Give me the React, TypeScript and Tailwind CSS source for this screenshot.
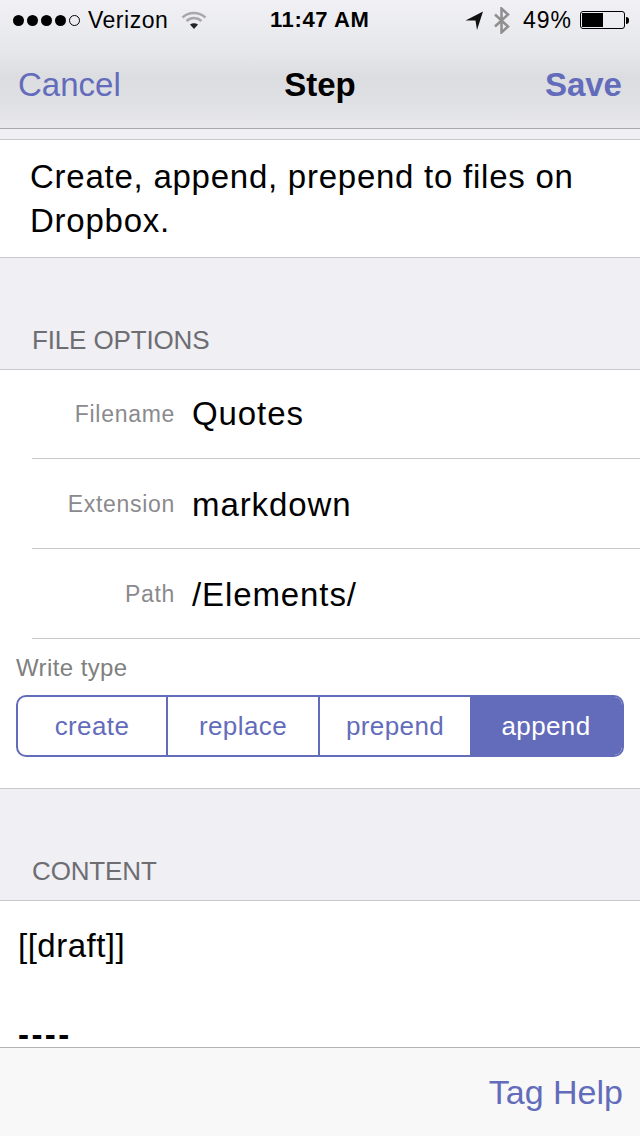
const font = "font-['Liberation_Sans',Arial,sans-serif]";

function StatusBar() {
  return (
    <div className="relative flex h-10 items-center justify-between pl-[13px] pr-[11px] text-[23px] leading-none text-black">
      <div className="flex items-center">
        <div className="flex items-center gap-[3px]">
          <span className="h-[11px] w-[11px] rounded-full bg-black" />
          <span className="h-[11px] w-[11px] rounded-full bg-black" />
          <span className="h-[11px] w-[11px] rounded-full bg-black" />
          <span className="h-[11px] w-[11px] rounded-full bg-black" />
          <span className="h-[11px] w-[11px] rounded-full border border-black" />
        </div>
        <span className="ml-[8px] tracking-[0.5px]">Verizon</span>
        <svg className="ml-[13px]" width="26" height="20" viewBox="0 0 26 20" fill="none">
          <path d="M1.500 7.500C8 1.500 17.500 1.500 24.500 7.500" stroke="#a8a8a8" strokeWidth="2.500" />
          <path d="M5.500 11C10 7 16 7 20.500 11" stroke="#a8a8a8" strokeWidth="2.500" />
          <path d="M9 14.500C11.500 12.700 14.500 12.700 17 14.500L13 19Z" fill="#222" />
        </svg>
      </div>
      <span className="absolute left-[270px] top-[9px] text-[22px] font-bold tracking-[0.6px]">11:47 AM</span>
      <div className="flex items-center">
        <svg width="18" height="19" viewBox="0 0 18 19">
          <path d="M0.500 9.500L18 0.500L12 19L10.500 9.500Z" fill="#111" />
        </svg>
        <svg className="ml-[11px]" width="16" height="27" viewBox="0 0 16 27" fill="none">
          <path d="M1 7.500L14 19.500L7.500 25.500V1.500L14 7.500L1 19.500" stroke="#8f8f8f" strokeWidth="2.500" />
        </svg>
        <span className="ml-[13px] tracking-[1px]">49%</span>
        <div className="ml-[8px] flex items-center">
          <div className="h-[18px] w-[45px] rounded-[3px] border border-black p-[1px]">
            <div className="h-full w-[21px] bg-black" />
          </div>
          <div className="ml-[1px] h-[7px] w-[3px] rounded-r-full bg-black" />
        </div>
      </div>
    </div>
  );
}

function NavBar() {
  return (
    <div className="grid h-[88px] grid-cols-3 items-start px-[18px] pt-[25px] text-[33px] leading-[40px]">
      <span className="text-[#636cbb]">Cancel</span>
      <span className="text-center font-bold text-black">Step</span>
      <span className="text-right font-bold text-[#636cbb]">Save</span>
    </div>
  );
}

function FieldRow({ label, value, box }: { label: string; value: string; box: string }) {
  return (
    <div className={`ml-8 flex items-center border-b border-[#c8c7cc] ${box}`}>
      <span className="w-[143px] text-right text-[23px] tracking-[0.7px] text-[#8a8a8e]">{label}</span>
      <span className="ml-[17px] text-[33px] tracking-[0.9px] text-black">{value}</span>
    </div>
  );
}

function SectionHeader({ title }: { title: string }) {
  return (
    <div className="flex h-[112px] items-end border-b border-[#c8c7cc] bg-[#efeff4] pb-[14px] pl-8 text-[26px] leading-[30px] tracking-[-0.15px] text-[#6d6d72]">
      {title}
    </div>
  );
}

function WriteType() {
  return (
    <div className="flex h-[150px] flex-col border-b border-[#c8c7cc] px-4 pt-[16px]">
      <span className="text-[24px] leading-[26px] tracking-[0.4px] text-[#808080]">Write type</span>
      <div className="mt-[14px] flex h-[62px] overflow-hidden rounded-[10px] border-2 border-[#636cbb] text-[26px] tracking-[0.4px] text-[#636cbb]">
        <div className="flex w-[150px] items-center justify-center border-r-2 border-[#636cbb]">create</div>
        <div className="flex w-[152px] items-center justify-center border-r-2 border-[#636cbb]">replace</div>
        <div className="flex w-[150px] items-center justify-center">prepend</div>
        <div className="flex flex-1 items-center justify-center bg-[#636cbb] text-white">append</div>
      </div>
    </div>
  );
}

export default function App() {
  return (
    <div className={`${font} flex h-[1136px] w-[640px] flex-col overflow-hidden bg-white`}>
      <div className="h-[129px] shrink-0 border-b border-[#a9a9ab] bg-[linear-gradient(180deg,#f1f1f5_0%,#e6e7ea_40%,#dcdde1_60%,#dfe0e4_80%,#e9e9ed_100%)]">
        <StatusBar />
        <NavBar />
      </div>
      <div className="h-[11px] shrink-0 border-b border-[#c8c7cc] bg-[#efeff4]" />
      <div className="h-[118px] shrink-0 border-b border-[#c8c7cc] pl-[30px] pr-4 pt-[15px] text-[33px] leading-[44px] tracking-[0.75px] text-black">
        Create, append, prepend to files on Dropbox.
      </div>
      <SectionHeader title="FILE OPTIONS" />
      <FieldRow label="Filename" value="Quotes" box="h-[89px]" />
      <FieldRow label="Extension" value="markdown" box="h-[90px] pt-[2px]" />
      <FieldRow label="Path" value="/Elements/" box="h-[90px] pt-[2px]" />
      <WriteType />
      <SectionHeader title="CONTENT" />
      <div className="min-h-0 flex-1 pl-[18px] pt-[23px] text-[33px] text-black">
        <div className="leading-[44px] tracking-[0.5px]">[[draft]]</div>
        <div className="mt-[55px] font-bold leading-[24px] tracking-[2.4px]">----</div>
      </div>
      <div className="flex h-[89px] shrink-0 items-center justify-end border-t border-[#b2b2b2] bg-[#f8f8f8] pr-[17px] text-[34px] text-[#636cbb]">
        Tag Help
      </div>
    </div>
  );
}
